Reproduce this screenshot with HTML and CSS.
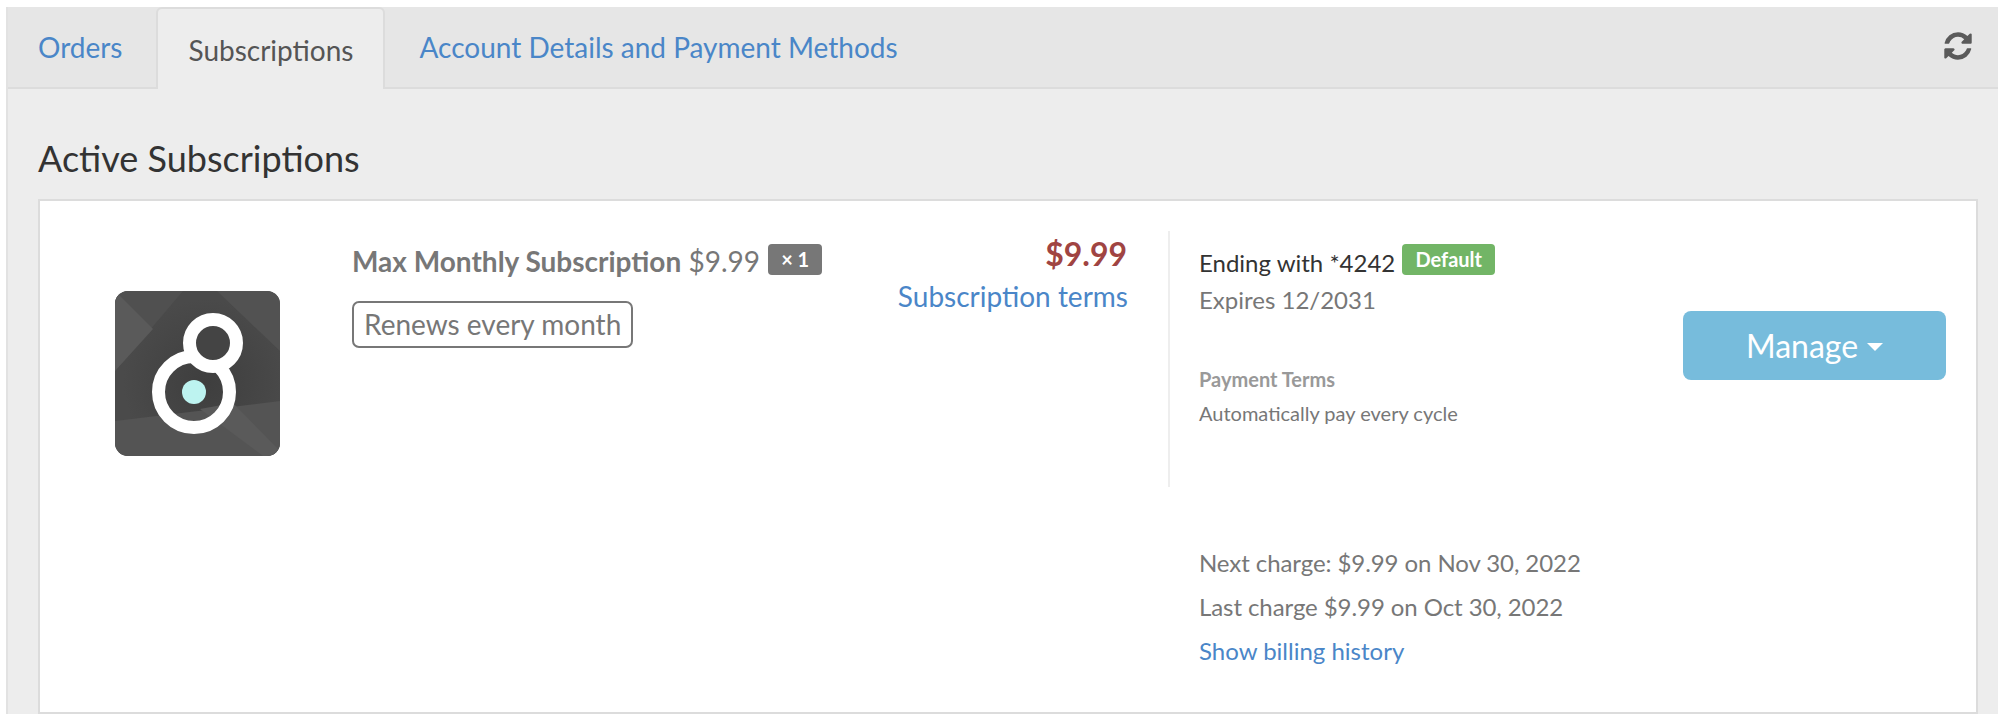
FILE: index.html
```html
<!DOCTYPE html>
<html lang="en">
<head>
<meta charset="utf-8">
<title>Subscriptions</title>
<link rel="stylesheet" href="styles.css">
</head>
<body>
<main class="panel">
  <nav class="tabs">
    <a class="tab" href="#">Orders</a>
    <a class="tab active" href="#">Subscriptions</a>
    <a class="tab" href="#">Account Details and Payment Methods</a>
    <button class="refresh" aria-label="Refresh">
      <svg viewBox="0 0 1792 1792" width="32" height="32"><path d="M1639 1056q0 5-1 7-64 268-268 434.5t-478 166.5q-146 0-282.5-55t-243.5-157l-129 129q-19 19-45 19t-45-19-19-45v-448q0-26 19-45t45-19h448q26 0 45 19t19 45-19 45l-137 137q71 66 161 102t187 36q134 0 250-65t186-179q11-17 53-117 8-23 30-23h192q13 0 22.5 9.5t9.5 22.5zm25-800v448q0 26-19 45t-45 19h-448q-26 0-45-19t-19-45 19-45l138-138q-148-137-349-137-134 0-250 65t-186 179q-11 17-53 117-8 23-30 23h-199q-13 0-22.5-9.5t-9.5-22.5v-7q65-268 270-434.5t480-166.5q146 0 284 55.5t245 156.5l130-129q19-19 45-19t45 19 19 45z"/></svg>
    </button>
  </nav>
  <section class="content">
    <h1 class="heading">Active Subscriptions</h1>
    <article class="card">
      <div class="logo-col">
        <svg class="logo" viewBox="0 0 165 165" width="165" height="165">
          <defs>
            <clipPath id="rr"><rect width="165" height="165" rx="13"/></clipPath>
            <radialGradient id="shade" cx="0.55" cy="0.55" r="0.5">
              <stop offset="0" stop-color="#3e3e3e"/>
              <stop offset="1" stop-color="#4a4a4a"/>
            </radialGradient>
          </defs>
          <g clip-path="url(#rr)">
            <rect width="165" height="165" fill="url(#shade)"/>
            <polygon points="0,80 68,0 0,0" fill="#505050"/>
            <polygon points="0,0 38,38 0,80" fill="#5a5a5a"/>
            <polygon points="102,0 165,60 165,0" fill="#525252"/>
            <polygon points="0,130 165,110 165,165 0,165" fill="#545454"/>
            <polygon points="118,112 165,160 165,165 148,165 85,118" fill="#5a5a5a"/>
          </g>
          <circle cx="79" cy="101" r="35.5" fill="none" stroke="#fff" stroke-width="13"/>
          <circle cx="98" cy="52" r="23.5" fill="#444" stroke="#fff" stroke-width="13"/>
          <circle cx="79" cy="101" r="12" fill="#bdf3f0"/>
        </svg>
      </div>
      <div class="item-col">
        <div class="item">
          <div class="item-title"><strong>Max Monthly Subscription</strong> $9.99 <span class="qty">× 1</span></div>
          <div class="renews">Renews every month</div>
        </div>
        <div class="price-col">
          <div class="price">$9.99</div>
          <a class="link" href="#">Subscription terms</a>
        </div>
      </div>
      <div class="pay-col">
        <div class="ending">Ending with *4242 <span class="default">Default</span></div>
        <div class="expires">Expires 12/2031</div>
        <div class="terms-label">Payment Terms</div>
        <div class="terms-value">Automatically pay every cycle</div>
      </div>
      <div class="action-col">
        <button class="manage">Manage<span class="caret"></span></button>
      </div>
      <div class="charges">
        <p class="charge">Next charge: $9.99 on Nov 30, 2022</p>
        <p class="charge">Last charge $9.99 on Oct 30, 2022</p>
        <a class="link history" href="#">Show billing history</a>
      </div>
    </article>
  </section>
</main>
</body>
</html>
```
FILE: styles.css
```css
* { box-sizing: border-box; }
html, body { margin: 0; height: 714px; overflow: hidden; background: #fff; }
body { padding: 7px 0 0 6px; font-family: Lato, sans-serif; color: #777; font-size: 24px; }
a { text-decoration: none; }
.panel { background: #ededed; border-left: 2px solid #e2e2e2; height: 707px; }
.tabs { display: flex; align-items: stretch; height: 82px; background: #e6e6e6; border-bottom: 2px solid #dcdcdc; }
.tab { font-size: 28px; color: #4a86c8; line-height: 80px; padding: 0 30px; height: 80px; margin-right: 5px; }
.tab.active { color: #555; background: #ededed; border: 2px solid #dcdcdc; border-bottom: 0; border-radius: 6px 6px 0 0; height: 82px; margin-left: -1px; margin-right: 4px; padding: 0 30px; line-height: 82px; }
.refresh { margin-left: auto; margin-right: 24px; background: none; border: 0; padding: 0; fill: #5a5a5a; display: flex; align-items: center; height: 78px; }
.content { padding: 0 20px 0 30px; }
.heading { margin: 0; padding-top: 45px; height: 110px; font-size: 36px; font-weight: 400; color: #333; line-height: 48px; }
.card { background: #fff; border: 2px solid #dcdcdc; height: 515px; display: grid; grid-template-columns: 312px 775px 556px 293px; grid-template-rows: 256px auto; padding-top: 30px; }
.logo-col { padding: 60px 0 0 75px; }
.logo { display: block; }
.item-col { display: flex; justify-content: space-between; }
.item-title { font-size: 28px; line-height: 34px; margin-top: 13px; white-space: nowrap; }
.item-title strong { font-weight: 700; }
.qty { display: inline-block; background: #777; color: #fff; font-size: 20px; font-weight: 700; line-height: 31px; height: 31px; padding: 0 13px; border-radius: 4px; vertical-align: 5px; margin-left: 1px; }
.renews { display: inline-block; border: 2px solid #777; border-radius: 7px; font-size: 28px; line-height: 43px; padding: 0 10px; margin-top: 23px; }
.price-col { text-align: right; }
.price { color: #a04442; font-size: 32px; font-weight: 700; line-height: 40px; margin-top: 3px; }
.link { color: #4a86c8; }
.price-col .link { font-size: 28px; line-height: 40px; display: block; margin-right: -1px; margin-top: 2px; }
.pay-col { margin-left: 41px; border-left: 2px solid #eee; padding-left: 29px; color: #777; }
.ending { color: #333; line-height: 32px; margin-top: 13px; }
.default { display: inline-block; background: #72b566; color: #fff; font-size: 20px; font-weight: 700; line-height: 31px; height: 31px; padding: 0 13px; border-radius: 4px; vertical-align: 5px; margin-left: 1px; }
.expires { line-height: 32px; margin-top: 5px; }
.terms-label { font-size: 20px; font-weight: 700; color: #999; line-height: 26px; margin-top: 50px; }
.terms-value { font-size: 20px; color: #777; line-height: 26px; margin-top: 8px; }
.action-col { padding-top: 80px; }
.manage { width: 263px; height: 69px; background: #77bcdc; border: 0; border-radius: 8px; color: #fff; font: 400 32px Lato, sans-serif; padding: 0; display: flex; align-items: center; justify-content: center; }
.caret { width: 0; height: 0; border: 8px solid transparent; border-top-color: #fff; border-bottom: 0; margin-left: 9px; margin-top: 3px; }
.charges { grid-column: 3 / 5; padding: 60px 0 0 72px; }
.charge { margin: 0 0 12px; line-height: 32px; letter-spacing: -0.08px; }
.history { display: block; line-height: 32px; margin-top: 12px; }
```
